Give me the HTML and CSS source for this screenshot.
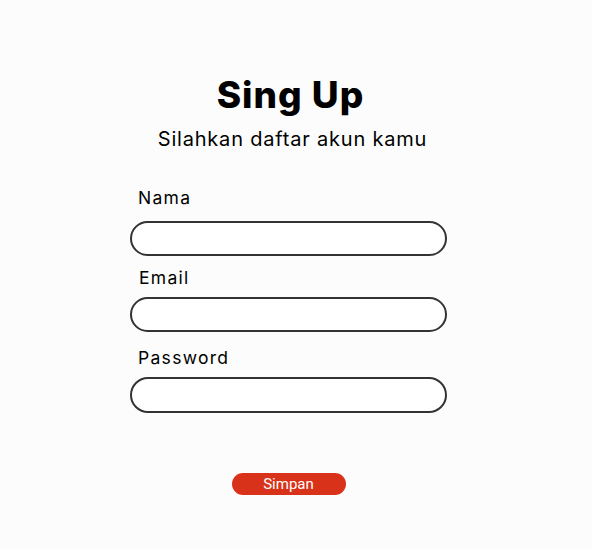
FILE: index.html
```html
<!DOCTYPE html>
<html lang="id">
<head>
<meta charset="utf-8">
<title>Sing Up</title>
<link rel="stylesheet" href="styles.css">
</head>
<body>
<main class="page">
  <header class="head">
    <h1 class="title">Sing Up</h1>
    <p class="subtitle">Silahkan daftar akun kamu</p>
  </header>
  <form class="form">
    <label class="field field-name">
      <span class="label">Nama</span>
      <input class="input" type="text">
    </label>
    <label class="field field-email">
      <span class="label label-email">Email</span>
      <input class="input" type="email">
    </label>
    <label class="field field-pass">
      <span class="label">Password</span>
      <input class="input input-tall" type="password">
    </label>
    <div class="actions">
      <button class="btn" type="button">Simpan</button>
    </div>
  </form>
</main>
</body>
</html>
```

FILE: styles.css
```css
html, body {
  margin: 0;
  padding: 0;
  background: #fcfcfc;
}
body {
  font-family: Inter, "Open Sans", sans-serif;
  color: #000;
  width: 592px;
  height: 549px;
}
.page {
  padding: 72px 145px 0 130px;
  display: flex;
  flex-direction: column;
}
.head {
  display: flex;
  flex-direction: column;
  align-items: center;
}
.title {
  margin: 0 0 0 4px;
  font-size: 37px;
  font-weight: 800;
  line-height: 46px;
  letter-spacing: 1px;
}
.subtitle {
  margin: 8px 0 0 8px;
  font-size: 20px;
  line-height: 26px;
  letter-spacing: 0.8px;
}
.form {
  margin-top: 34px;
  display: flex;
  flex-direction: column;
}
.field {
  display: flex;
  flex-direction: column;
}
.label {
  padding-left: 8px;
  font-size: 17.5px;
  line-height: 24px;
  height: 24px;
  letter-spacing: 1.3px;
}
.field-name .label { margin-bottom: 11px; }
.field-email .label { margin-top: 10px; margin-bottom: 7px; }
.field-pass .label { margin-top: 14px; margin-bottom: 7px; }
.label-email { padding-left: 9px; }
.input {
  box-sizing: border-box;
  width: 317px;
  height: 35px;
  border: 2px solid #333;
  border-radius: 18px;
  background: #fff;
  margin: 0;
  outline: none;
}
.input-tall { height: 36px; }
.actions {
  display: flex;
  justify-content: center;
  margin-top: 60px;
}
.btn {
  width: 114px;
  height: 22px;
  border: none;
  border-radius: 11px;
  background: #d9321a;
  color: #fff;
  font-family: Roboto, "Noto Sans", sans-serif;
  font-size: 15px;
  line-height: 22px;
  padding: 0;
}
```
